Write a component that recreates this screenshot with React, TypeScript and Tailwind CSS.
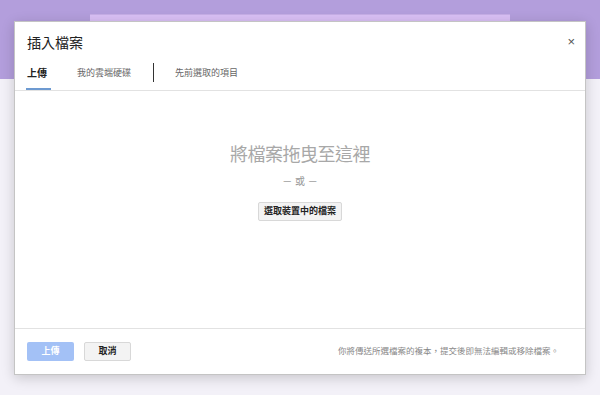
import React from 'react';

const FONT = { fontFamily: '"Liberation Sans", "Noto Sans CJK TC", sans-serif' };

export default function App() {
  return (
    <div className="relative w-[600px] h-[395px] overflow-hidden bg-[#f3f1f8]" style={FONT}>
      {/* Page behind the dialog */}
      <div className="h-[79px] bg-[#b39edc] pt-[14px]">
        <div className="ml-[90px] w-[420px] h-[20px] bg-[#d9bff5] border-t border-[#c6aee6]" />
      </div>

      {/* Dialog */}
      <div className="absolute left-[14px] top-[21px] w-[572px] h-[354px] bg-white border border-[#c4c4c4] shadow-[0_3px_12px_rgba(0,0,0,0.18)] flex flex-col">
        {/* Header */}
        <div className="h-[39px] px-[12px] flex items-center justify-between">
          <h1 className="text-[14px] text-[#222] pt-[3px]">插入檔案</h1>
          <span className="text-[13px] leading-none text-[#555] mr-[-2px] mt-[-1px]">×</span>
        </div>

        {/* Tabs */}
        <div className="h-[29px] px-[12px] flex items-stretch text-[9px]">
          <div className="w-[50px] flex flex-col">
            <div className="flex-1 flex items-center text-[#222] font-bold text-[10px] pb-[3px]">上傳</div>
            <div className="w-[25px] h-[2px] bg-[#6d9ad1] -ml-px" />
          </div>
          <div className="w-[76px] flex items-center text-[#666] pb-[3px]">我的雲端硬碟</div>
          <div className="flex items-center pb-[6px]">
            <div className="w-px h-[19px] bg-[#333]" />
          </div>
          <div className="ml-[21px] flex items-center text-[#666] pb-[3px]">先前選取的項目</div>
        </div>
        <div className="h-px bg-[#e2e2e2]" />

        {/* Drop area */}
        <div className="flex-1 flex flex-col items-center pt-[52px]">
          <div className="text-[18px] leading-[24px] text-[#a8a8a8] tracking-[-0.5px]">將檔案拖曳至這裡</div>
          <div className="mt-[8px] text-[10px] leading-[14px] text-[#999]">－ 或 －</div>
          <button className="mt-[13px] h-[19px] px-[5px] bg-[#f3f3f3] border border-[#d8d8d8] rounded-[2px] text-[9px] font-bold text-[#222]">
            選取裝置中的檔案
          </button>
        </div>

        {/* Footer */}
        <div className="h-px bg-[#e2e2e2]" />
        <div className="h-[45px] pl-[12px] pr-[26px] flex items-center">
          <button className="w-[47px] h-[19px] bg-[#a3c1f6] rounded-[2px] text-[9px] font-bold text-white">上傳</button>
          <button className="ml-[10px] w-[47px] h-[19px] bg-[#f3f3f3] border border-[#d8d8d8] rounded-[2px] text-[9px] font-bold text-[#222]">取消</button>
          <div className="ml-auto text-[8.5px] text-[#888]">你將傳送所選檔案的複本，提交後即無法編輯或移除檔案。</div>
        </div>
      </div>
    </div>
  );
}
